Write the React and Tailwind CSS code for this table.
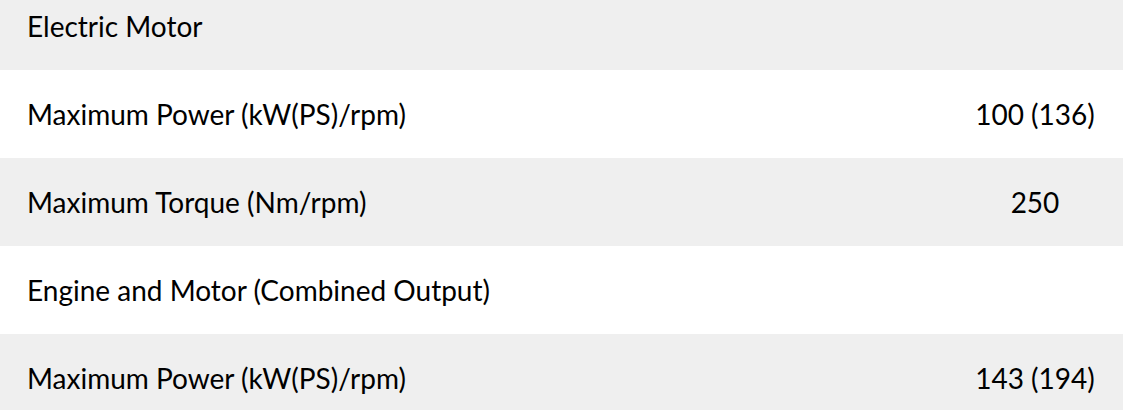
import React from "react";

const rows = [
  { label: "Electric Motor", value: "", gray: true },
  { label: "Maximum Power (kW(PS)/rpm)", value: "100 (136)", gray: false },
  { label: "Maximum Torque (Nm/rpm)", value: "250", gray: true },
  { label: "Engine and Motor (Combined Output)", value: "", gray: false },
  { label: "Maximum Power (kW(PS)/rpm)", value: "143 (194)", gray: true },
];

export default function App() {
  return (
    <div className="w-[1123px] h-[410px] overflow-hidden bg-white text-black" style={{ fontFamily: '"Lato", "Open Sans", sans-serif' }}>
      <div className="-mt-[18px] flex flex-col">
        {rows.map((r, i) => (
          <div key={i} className={`flex h-[88px] items-center ${r.gray ? "bg-[#efefef]" : "bg-white"}`}>
            <div className="flex-1 pl-[27px] text-[28px]">{r.label}</div>
            <div className="w-[176px] text-center text-[28px]">{r.value}</div>
          </div>
        ))}
      </div>
    </div>
  );
}
